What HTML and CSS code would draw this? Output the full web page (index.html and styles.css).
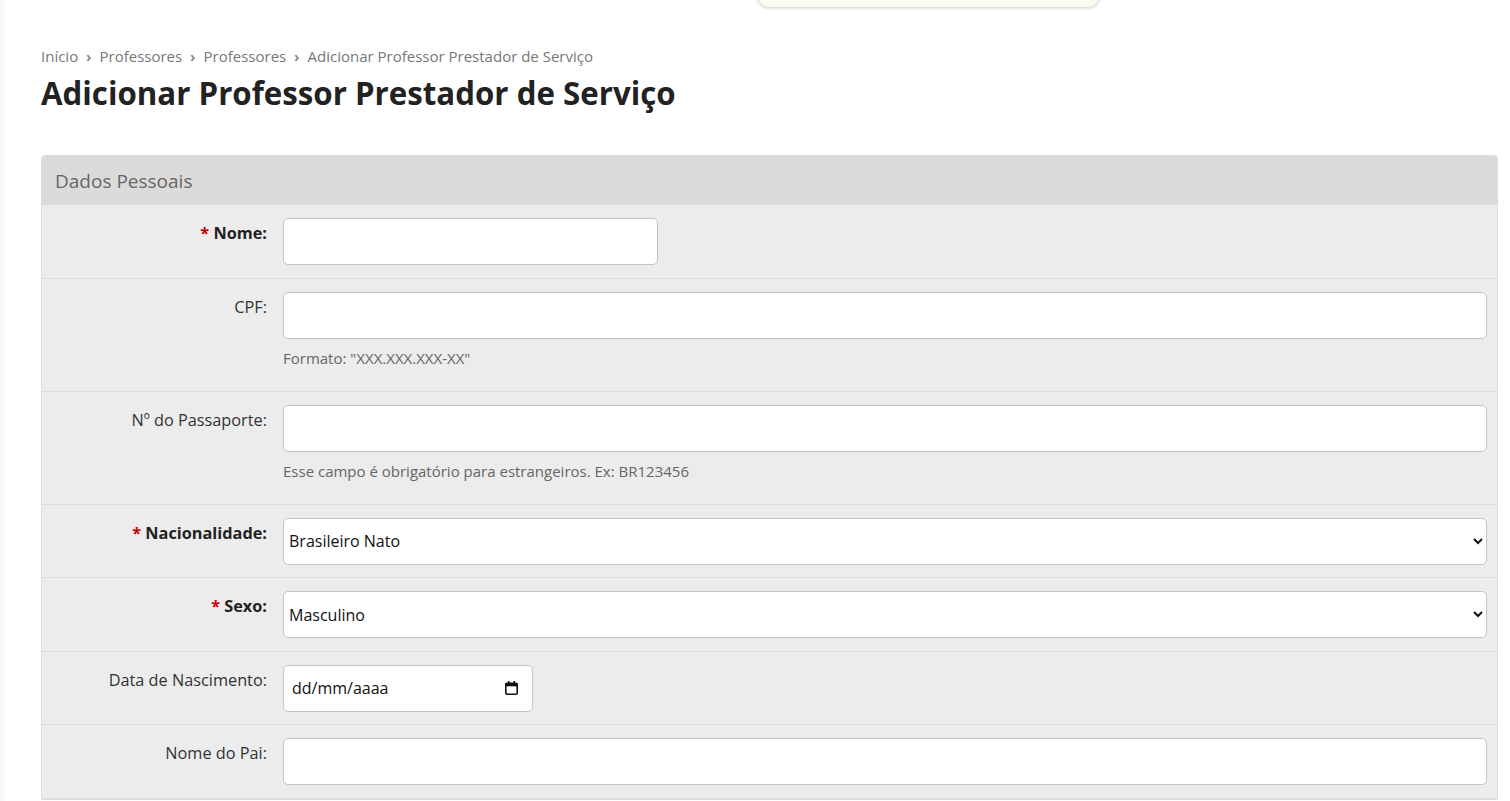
FILE: index.html
```html
<!DOCTYPE html>
<html lang="pt-BR">
<head>
    <meta charset="UTF-8">
    <meta name="viewport" content="width=device-width, initial-scale=1.0">
    <title>Adicionar Professor Prestador de Serviço</title>
    <link rel="stylesheet" href="styles.css">
</head>
<body>
    <div class="notice"></div>
    <div class="content">
        <nav class="breadcrumbs">
            <a href="#">Início</a>
            <span class="sep">&rsaquo;</span>
            <a href="#">Professores</a>
            <span class="sep">&rsaquo;</span>
            <a href="#">Professores</a>
            <span class="sep">&rsaquo;</span>
            <span>Adicionar Professor Prestador de Serviço</span>
        </nav>
        <h1 class="title">Adicionar Professor Prestador de Serviço</h1>

        <form class="module">
            <h2 class="module-title">Dados Pessoais</h2>

            <div class="form-row">
                <label class="required" for="nome"><span class="star">*</span> Nome:</label>
                <div class="field">
                    <input class="input input-mid" type="text" id="nome">
                </div>
            </div>

            <div class="form-row">
                <label for="cpf">CPF:</label>
                <div class="field">
                    <input class="input" type="text" id="cpf">
                    <p class="help">Formato: "XXX.XXX.XXX-XX"</p>
                </div>
            </div>

            <div class="form-row">
                <label for="passaporte">Nº do Passaporte:</label>
                <div class="field">
                    <input class="input" type="text" id="passaporte">
                    <p class="help">Esse campo é obrigatório para estrangeiros. Ex: BR123456</p>
                </div>
            </div>

            <div class="form-row">
                <label class="required" for="nacionalidade"><span class="star">*</span> Nacionalidade:</label>
                <div class="field">
                    <select class="input select" id="nacionalidade">
                        <option>Brasileiro Nato</option>
                        <option>Brasileiro Naturalizado</option>
                        <option>Estrangeiro</option>
                    </select>
                </div>
            </div>

            <div class="form-row">
                <label class="required" for="sexo"><span class="star">*</span> Sexo:</label>
                <div class="field">
                    <select class="input select" id="sexo">
                        <option>Masculino</option>
                        <option>Feminino</option>
                    </select>
                </div>
            </div>

            <div class="form-row">
                <label for="nascimento">Data de Nascimento:</label>
                <div class="field">
                    <div class="input date">
                        <input type="text" id="nascimento" placeholder="dd/mm/aaaa">
                        <svg class="cal" width="13" height="14" viewBox="0 0 13 14">
                            <rect x="3" y="0" width="1.6" height="2.5" fill="#111"/>
                            <rect x="8.4" y="0" width="1.6" height="2.5" fill="#111"/>
                            <rect x="0.8" y="2.3" width="11.4" height="10.9" rx="1" fill="none" stroke="#111" stroke-width="1.6"/>
                            <rect x="0.8" y="2.3" width="11.4" height="3" fill="#111"/>
                        </svg>
                    </div>
                </div>
            </div>

            <div class="form-row">
                <label for="pai">Nome do Pai:</label>
                <div class="field">
                    <input class="input" type="text" id="pai">
                </div>
            </div>
        </form>
    </div>
</body>
</html>
```

FILE: styles.css
```css
*{
    margin: 0;
    padding: 0;
    box-sizing: border-box;
}
body{
    font-family: "Open Sans", "Liberation Sans", sans-serif;
    color: #333;
    background: #fff;
}
a{
    text-decoration: none;
    color: inherit;
}
.notice{
    position: absolute;
    left: 757px;
    top: -20px;
    width: 343px;
    height: 28px;
    background: #f9fbf2;
    border: 1px solid #dde1cf;
    border-radius: 12px;
    box-shadow: 0 1px 3px rgba(0,0,0,.12);
}
.content{
    min-height: 801px;
    padding: 46px 12px 0 41px;
    box-shadow: inset 5px 0 5px -3px rgba(0,0,0,.05);
}
.breadcrumbs{
    font-size: 15px;
    line-height: 20px;
    color: #777;
}
.breadcrumbs .sep{
    margin: 0 4px;
    font-weight: bold;
    color: #888;
}
.title{
    margin-top: 7px;
    font-size: 31.25px;
    line-height: 40px;
    font-weight: 700;
    color: #222;
}
.module{
    margin-top: 42px;
    border: 1px solid #ddd;
    border-radius: 4px 4px 0 0;
    background: #ececec;
}
.module-title{
    height: 49px;
    padding: 0 13px;
    background: #dcdbd9;
    border-radius: 4px 4px 0 0;
    font-size: 19px;
    line-height: 50px;
    font-weight: 400;
    color: #666;
}
.form-row{
    display: flex;
    gap: 16px;
    padding: 13px 10px 12.5px 0;
    border-bottom: 1px solid #dcdcdc;
}
.form-row label{
    flex: 0 0 225px;
    padding-top: 4px;
    text-align: right;
    font-size: 16.3px;
    line-height: 22px;
    color: #333;
}
.form-row label.required{
    font-weight: 700;
    color: #222;
}
.star{
    color: #c00;
}
.field{
    flex: 1;
}
.input{
    display: block;
    width: 100%;
    height: 47px;
    padding: 0 5px;
    border: 1px solid #c4c4c4;
    border-radius: 5px;
    background: #fff;
    font-family: "Open Sans", "Liberation Sans", sans-serif;
    font-size: 16px;
    color: #111;
}
.select{
    padding-left: 1px;
}
.input-mid{
    width: 375px;
}
.help{
    margin: 9px 0 10.5px;
    font-size: 15px;
    line-height: 20px;
    color: #666;
}
.date{
    width: 250px;
    display: flex;
    align-items: center;
    padding: 0 14px 0 8px;
}
.date input{
    flex: 1;
    min-width: 0;
    border: 0;
    outline: 0;
    background: transparent;
    font-family: "Open Sans", "Liberation Sans", sans-serif;
    font-size: 16px;
    color: #111;
}
.date input::placeholder{
    color: #111;
    opacity: 1;
}
.cal{
    flex: 0 0 auto;
}
```
